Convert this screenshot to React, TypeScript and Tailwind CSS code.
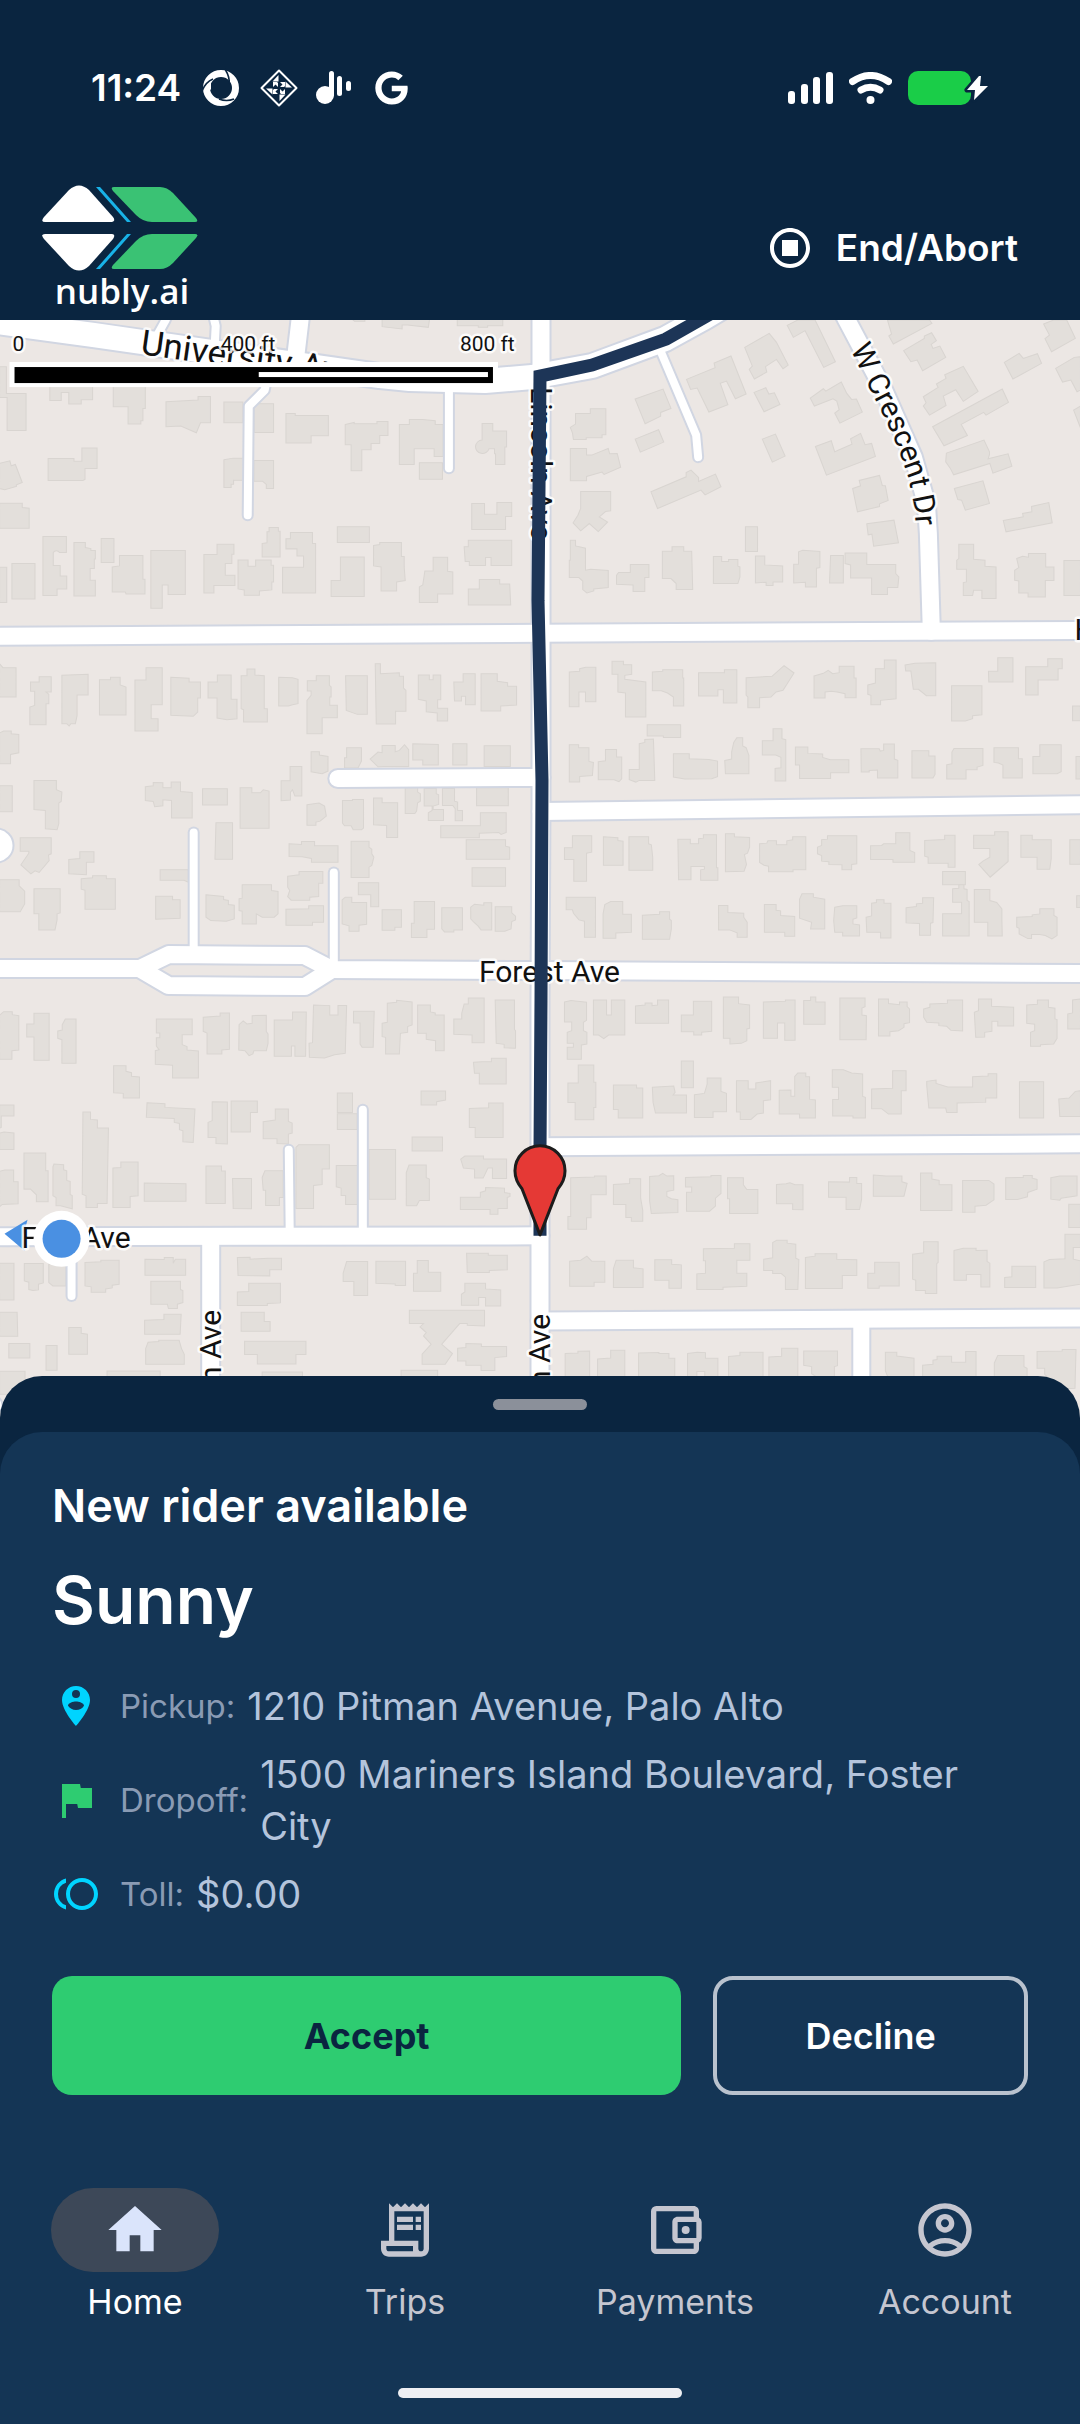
import type { ReactNode } from 'react';
import type { IconType } from 'react-icons';
import { FaGoogle } from 'react-icons/fa';
import {
  MdFlag,
  MdHome,
  MdOutlineAccountBalanceWallet,
  MdOutlineAccountCircle,
  MdOutlineReceiptLong,
  MdOutlineStopCircle,
  MdPersonPinCircle,
  MdToll
} from 'react-icons/md';

// Building footprints, grouped by map tile. Every tile has its own 1568 x 1200 unit grid.
interface Tile {
  id: string;
  x: number;
  y: number;
  buildings: string[];
}

const TILES: Tile[] = [
  {
    id: 'north-west',
    x: 0,
    y: 310,
    buildings: [
      'M0 170h20v80h57v111h-55v-99h-22z M146 225H270V269H237V282H201V247H179V271H146Z M330 225H423V295H416V332H410V342H373V290H330Z',
      'M483 275L576 270V259H612V338H583L571 368L526 348L483 350Z M651 276H706V338H651Z M739 281H795V367H739Z M831 310H858V316H954V377H904V399H831Z',
      'M1003 343L1029 337V341H1095V334H1127V376H1103V400H1078V419H1051V482H1020V404H1003Z M1160 343H1189V328H1227L1264 332V343H1287V439H1261V416H1203V463H1160Z',
      'M1218 458H1285V507H1218Z M1400 340H1431V363H1471V411H1466V463H1439V431H1436V416H1420A20 20 0 1 1 1400 390Z M141 445H216V453H239V414H283V475H248V508L242 511H141Z',
      'M0 460L30 452L34 467L46 463L66 517L49 524V529L15 539L0 535Z M0 579H66V592L86 594V654H0Z M651 449L678 444H708V510H679V522H672V532H651Z',
      'M738 451H795V535H774V523L763 513H738Z M1370 580H1407V612H1443V577H1486V619H1468V658H1370Z M126 679H194V727H174A10 10 0 0 0 156 727V766H176V797H195V836H167V856H126Z',
      'M216 697H249V712L265 715V721H278V746H275V775H263V810H278V857H216Z M295 685H332V757H295Z M327 770L348 767V736H416V807H422V851H367L365 845H327Z',
      'M439 721H539V853H489V824H472V894H439Z M593 733H631V702H680V732H674V760H655V795H683V826H622V848H593Z M692 749H721V768H743V749H788V765H795V815H790V839L754 842V855H710V839L692 836Z',
      'M762 700L776 698V665H782V652H809V663H814V740H762Z M831 686H844V667H908V700H917V848H821V771H882V737H863V716H831Z M980 650H1073V697H980Z M962 811H989V740H1058V859H962Z',
      'M1085 706L1103 703V697H1166V739H1174V770L1177 811L1152 815V842H1107V770L1085 767Z M1218 830L1228 824L1234 782H1258V741H1300V783L1315 785V851H1271V877H1218Z',
      'M1348 710H1360V690H1486V766H1426V742H1410V766H1363V754H1351Z M1360 836H1392V808H1451V821H1480L1483 884H1360Z M36 760H103V866H36Z M0 771H21V877H0Z',
      'M1110 25H1248L1244 52L1184 45H1168V57L1110 50Z M1328 25H1460V47H1416V52H1389V47H1328Z M1020 25H1060V34H1030Z',
      'M0 1060L10 1072H48V1160H0Z M90 1115H115V1099H150V1145H135L143 1152V1180H135V1243H88V1190L102 1185V1143H90Z M181 1095L257 1092V1154H225V1216L220 1240H207L202 1247L195 1240H181Z',
      'M290 1108H322V1101H350V1124L367 1130V1214H290Z M393 1109H425V1072H472V1183H440V1225H460V1262H393Z M497 1101L550 1104V1115H583V1163H575V1205L562 1218L497 1215Z',
      'M605 1115H632V1094H672V1167H689V1225L660 1228L631 1223V1163H605Z M701 1096H718V1076H741V1094L768 1096V1195H777V1235H708V1198L701 1195Z M810 1101L850 1102L866 1107V1180L850 1183L838 1187H810Z',
      'M893 1111H919V1096H957V1125L962 1130V1160H958V1185H980V1222H936V1270H892V1170L904 1155V1142H893Z M1004 1096H1067V1212H1038L1006 1200Z M1090 1060H1105V1090L1160 1087V1098H1172V1133L1179 1140V1203H1149V1241H1093Z',
      'M1215 1094H1247V1108H1258V1094H1280V1168H1271V1194H1300V1232H1270V1208L1238 1204V1172L1215 1167Z M1318 1115H1345V1090H1380V1183H1352V1158H1340V1172H1320Z M1397 1090H1444V1113L1474 1117V1128H1500V1184L1454 1187V1202H1397Z'
    ]
  },
  {
    id: 'north-east',
    x: 540,
    y: 310,
    buildings: [
      'M88 352L103 342V310H146V296H191V374H180V383H134V388H97L94 368Z M276 267L357 237L380 295L350 307V318L305 341Z M276 387L344 359L359 396L291 426Z',
      'M88 415H135V435H150L198 415L202 431L224 430L234 471L186 493L180 486L135 499V512H88Z M322 545L424 500V487L438 480L460 502V514L509 492L525 530L479 554L467 540L341 595Z',
      'M425 208L508 173L505 159L554 138L598 252L567 266L541 213L523 220L545 284L490 306L456 234L437 238Z M594 112L665 70L686 97L720 165L705 176L686 148L654 170L658 186L622 207L607 178L616 168Z',
      'M621 247L655 233L664 252L680 248L696 283L650 305Z M717 46L748 30H798L857 155L823 172L769 62L735 82Z M784 264L822 236L829 243L874 216L890 250L904 268L918 267L935 306L870 339L855 309L868 299L861 273L850 266L796 288Z',
      'M645 387L683 372L711 438L674 456Z M799 409L845 392L855 425L905 402L901 386L930 370L943 404L962 400L973 439L831 495Z M907 535L930 527L926 511L985 496L993 526L1002 527L1010 571L985 581V589L921 605Z',
      'M948 641L1027 630L1040 698L968 708L963 672L952 674Z M118 544H205V602L190 604L172 620L196 636L169 664L143 640L118 662L96 638L110 615L118 595Z',
      'M88 690H103V707L132 714V780L147 777L198 781V832L156 836V842L136 848L124 838V813L113 802H85V750H88Z M222 795L228 787H262V763H316V802H304V844H270V824L222 822Z',
      'M355 723H383V710H417V723H440L443 838H395V820L380 805H355Z M503 739H527V754H547V748H574V768L580 770V800L574 820H503Z M596 650H631V724H596Z',
      'M625 737H652V764L704 767V815H676V826H656V816L625 818Z M736 762H750V725L762 720L812 724V772L802 774V830H770V816L736 818Z M843 736H880V818H840Z',
      'M885 728H948V763H1032V790L1041 800L1038 832H1008V853H962V803H901V764L885 760Z M1008 30H1130L1137 40L1025 102L1012 78L1020 72Z',
      'M1055 122L1115 85V78L1136 68L1150 92L1135 103L1140 115L1160 108L1177 142L1110 182L1094 150L1076 155Z M1112 260L1155 232L1150 222L1178 205L1174 194L1228 169L1271 244L1228 274L1206 239L1170 258L1178 286L1130 315L1112 288L1120 278Z',
      'M1139 350L1341 237L1359 277L1294 315L1287 307L1222 343L1240 376L1172 407Z M1179 429L1288 390L1304 425V433L1300 446L1358 431L1369 468L1314 489L1305 460L1200 494L1190 474L1177 455Z',
      'M1202 535L1285 512L1304 580L1234 600L1223 570L1212 568Z M1344 631L1402 620L1400 610L1427 605L1426 589L1476 577L1486 638L1352 665Z M1347 157L1390 130L1402 145L1443 131L1455 160L1372 207Z',
      'M1461 42L1490 30H1528L1553 85L1484 125L1465 86L1478 75Z M1496 175L1550 142L1568 140V240L1558 245L1540 210L1516 216Z M1548 300L1568 288V353Z',
      'M1215 702H1258V747L1291 750V768L1323 770V865H1282V840H1258L1255 856H1228V817L1237 815V777H1209V750L1215 745Z M1383 745L1400 738L1417 741V730H1467V770H1491V811H1466V860H1416V848H1389V812L1377 810V780L1389 772Z M1520 751H1568V856H1520Z',
      'M85 1085L115 1083V1075L133 1071H162V1174H132V1145H113V1189H85Z M209 1053H242V1063H266V1092L246 1095V1107L307 1115V1220H248V1148L226 1145V1092H209Z M326 1085L356 1083V1078H414V1103H417V1187H387V1160L370 1148L352 1141H326Z',
      'M460 1087H535V1078H571V1178H532V1138H516V1157H460Z M598 1102L673 1098L708 1066L737 1088L705 1140L685 1145L670 1160L637 1162V1192H603V1160L598 1155Z M795 1097L822 1089L836 1080L849 1090L868 1087V1068H911V1103H917V1162H885V1150L862 1145L845 1143L827 1145V1163H795Z',
      'M951 1124L973 1118V1075H999V1049H1033V1165L988 1170V1183H960V1155L951 1152Z M1059 1064L1088 1059L1148 1057V1156H1121L1098 1137H1083L1076 1082H1061Z M1194 1126H1282V1213L1255 1216V1225L1234 1232H1194Z',
      'M1301 1083H1328V1042H1372V1115H1302Z M1409 1069H1473V1045H1515V1075H1503V1109H1445V1154H1409Z M1545 1187h23v44h-23z'
    ]
  },
  {
    id: 'middle-west',
    x: 0,
    y: 700,
    buildings: [
      'M0 98L12 92H34V100L56 102V157L32 162V190H0Z M0 256H37V334H0Z M100 240H165V268L181 275L179 303L172 308V370L167 388L133 385V330L100 327Z M60 412H150V460L142 464L144 480L115 516L103 511L91 520L62 493L85 458V452H60Z',
      'M201 477L233 474V454H274V485H252V523L201 520Z M0 538H57V556L73 572V610L60 634H0Z M100 565H176V637L167 640V658L161 688H114V640H100Z M237 535L270 532V526H310V535H336V626H248V569L237 566Z',
      'M423 259L446 256V246L474 247V262H498V245H525V273L559 276V353H499V300L474 298V316L450 319L446 303L423 300Z M589 265H661V314H589Z M698 262H732V277H757L765 268L782 272V383H698Z',
      'M817 241H843V198H877V287H857L850 268L844 275V299L817 301Z M628 367H676V476H625Z M904 154H928V164L953 168V212L936 220L904 214Z M1001 172H1007V142H1050V182L1040 203H1001Z',
      'M1075 176L1098 155L1110 157V135H1148V154L1160 150L1175 133L1187 148V198H1115L1098 199Z M1199 130L1273 132V194H1228V179H1199Z M1315 130H1356V194H1315Z M1406 136H1482V198H1406Z',
      'M466 508H548V545L535 539H466Z M453 587H502V598H524V653L453 656Z M599 583L650 588V597L664 600V612L681 614V655L658 662L613 660L599 650Z M695 595L704 593V553H789V570L808 573V640L797 650H762L745 640V670H704V632L695 630Z',
      'M836 527L869 523V513H938V548H926V588L900 590V599H846L836 588L842 570L836 560Z M831 626L897 625V616H940V665H908V674H831Z M840 430L876 432V423H914V436H982V485H905V474L878 469L840 468Z',
      'M892 313L927 308L943 317L948 347L930 362L918 365V374H892Z M995 300H1024V297H1056V383L1050 388H1026L1020 376H1001L995 368Z M1085 293H1110V307H1155V411H1123V375L1085 373Z M1177 262H1213V275L1221 280V302L1213 307L1210 332L1205 339H1177Z',
      'M1232 264H1267V280L1274 283V312L1258 317V327H1288V360H1244V337L1255 330V317H1232Z M1285 264H1320V302L1329 305V330H1343V361H1322V325L1315 315H1285Z M1384 262H1476V316H1384Z M1280 376H1395V337H1470V396L1455 402L1448 396L1392 398V412H1280Z',
      'M1354 418H1468V437L1480 440V476H1354Z M1371 502H1468V557H1371Z M1020 422H1072V440L1080 446V460L1086 470L1080 495L1072 500V531H1020Z M1041 547H1100V619H1077V583H1041Z M994 598L1003 590H1022V606H1065V671L1043 674V692H1014V676L994 670Z',
      'M1110 628H1166V680H1147V689H1110Z M1203 603H1262V686H1240V711H1195V668H1203Z M1283 622H1343V688H1318V694H1291L1283 685Z M1367 620L1378 611L1405 614V607H1428V688H1397L1388 676L1376 665L1367 655Z M1438 619H1486V637L1497 647V658L1486 663L1484 685L1466 692H1438Z',
      'M0 944L12 933H37V942L56 945V1048L36 1050V1076H0Z M79 970H100V938H144V1079H100V1009H79Z M169 991L182 988V972L191 955H222V1088H181V1017L169 1013Z M455 955H559V1002H530V1032L544 1038V1048L577 1051V1132H502V1094L452 1091V1050L463 1047L455 1036V1011H465V997H455Z',
      'M591 950L640 946V937H667V1046L645 1048V1060H602V997L591 992Z M695 972L707 961L718 970L733 968V945L774 944V993L779 1000V1028L774 1050H738L735 1060L724 1065L712 1050L694 1048Z M797 958H850V934H890L888 1067H857V1036H847V1067H797Z',
      'M898 1028L908 1026L911 913L958 915V943H982V915H1007L1003 1058L972 1062L943 1072L899 1070Z M1027 932H1087L1084 1040H1052L1046 1030V967H1027Z M1110 968L1125 965V908L1152 905V899L1197 904V973L1184 978V995L1163 998L1160 1060H1120V1010L1110 1008Z',
      'M1213 913H1250V934L1264 937V943H1290V1050H1265V1020L1238 1016V998H1213Z M1318 955H1341V938L1348 910H1360V892H1406V1026H1371V1003L1318 1001Z M1438 898H1494V987L1497 990V1043L1464 1041V1031L1441 1028Z',
      'M331 1095H367V1112L383 1116V1127L406 1129V1192H359V1178L331 1176Z M1375 1085L1400 1083H1427V1073H1470V1150H1392V1118H1378Z M980 1177H1024V1235H980Z M1223 1171H1294V1198L1268 1203V1213H1223Z'
    ]
  },
  {
    id: 'middle-east',
    x: 540,
    y: 700,
    buildings: [
      'M311 73H408V111H358V107H311Z M85 133H112V142H142V183L155 186L152 225L115 228V245H85Z M169 184L190 181V147H222V170H237V235L229 244L215 238H169Z M259 207H288V130L304 126V117L329 116L333 240H288L278 245L259 238Z',
      'M387 160H433V175L490 177L515 182V229L498 235L420 236L387 230Z M536 180L556 176V155L562 126L571 112H588V137L598 142L606 165V220H538Z M645 121H676V85H702V115L713 118V242H682V204L699 202V171L684 164H645Z',
      'M741 140H777V159L820 161V171L842 178H896V217H843V234H753V194H741Z M931 145H984L987 152L997 150V131H1028V176L1038 180V233H979V209L955 210V215H932Z M1079 151H1128V167H1146V222L1140 233H1079Z',
      'M1180 193L1195 190V155L1201 144H1285V195L1268 200V208H1236V236H1180Z M1317 142H1388V175H1399V233H1343V194L1330 188L1317 186Z M1430 168H1450V133H1512V214L1500 220H1430Z M1555 168H1568V236H1555Z',
      'M71 442H94V406H150V455L135 458V542H98V477H71Z M184 409L226 412V420L241 422V494H184Z M258 409H315V430L323 433L327 470V509H258Z M400 416H436V430H460V415L474 413V403H512V502H516V539H466V508L477 506V498H438V538H402Z',
      'M538 400H564V409L608 411V440L602 458L593 462L599 492L592 512L538 514Z M637 430L658 428L661 421H686V433H716V421L733 418V409H771V508H734V514H663V497L650 494L637 486Z M805 440L817 435V418L834 416V406H919V490L904 492V508H876V493L838 492V484L817 482V465L805 460Z',
      'M959 436L991 435L997 430H1032V397H1073V450L1087 456V485H1024V477H959Z M1116 420L1174 417V404H1204V500H1184V488H1126V470L1116 467Z M1168 513H1234V553H1168Z M1258 404H1319V394H1358V483L1306 530L1273 492L1285 482L1305 470V444H1258Z',
      'M1395 404H1428V418H1483V475L1479 506H1442V470H1395Z M1537 418H1568V491H1537Z M76 590H161V710H129V662L113 658L97 638L94 628H76Z M183 640L188 612L205 603H240V641H265V695L220 697V713H183Z M297 644L347 641V634H376V656L381 660V685L376 716H297Z',
      'M518 615H545V636L591 638V650L601 665V710H572V697L550 688H518Z M651 612H685V629L698 631V645L739 648V707H710V695H651Z M753 596L760 580H793V590L826 596V685H785L788 665L753 653Z M855 620L878 616H919V652L908 656V670L927 673V706H878V695H855L852 660Z',
      'M946 650L962 646V608L976 606V598H998V608H1018V712H988V695H948Z M1062 622L1092 618V610L1110 608V592H1142L1140 666L1133 668V704H1101V669L1062 667Z M1197 565L1215 563V553H1230V565L1239 567V600L1245 603V706H1168V640H1223V605H1197Z',
      'M1260 567H1305V600L1325 606L1340 625V660L1341 706H1299V665H1260Z M1383 650L1428 648V643L1450 640V625H1491V645L1500 650V705L1485 715L1466 705L1450 702H1426V714H1415L1390 700V683L1383 680Z M1557 586h11v35h-11z',
      'M71 904L90 900L135 905V959L126 965V990L136 995V1030L120 1033V1076H79V1040H97V1028H79V995L92 990V964H71Z M155 898H193V943H207V898H246V1003H199L185 1014L170 1003H155Z M277 916L305 913V907H325V915L341 913V898H373V968H277Z',
      'M410 943H445V902H498V992L469 995V1003H446V993H410Z M532 889H576V909L608 913V983L600 985V1020L584 1028L551 1030V1013H532Z M648 904L712 902V898H740V1019H710V967H689V1013H648Z M765 900H785V889H800V904H827V971H765Z M870 892H943V918L934 922V943L947 945L946 1017H870Z',
      'M982 895H1011V909L1043 912V904H1065V918L1072 925V966L1056 969V980L1040 990L1015 993V1006H982Z M1113 925L1131 920V910L1182 908V898H1226V991L1192 989L1180 977L1157 975V967L1122 965L1113 950Z M1260 935L1272 930V895H1310V917L1374 920V976H1328V962H1311V992L1290 995V1009L1264 1010Z',
      'M1412 913L1443 911V898H1475V920L1494 923V955L1500 957V1013L1490 1030L1452 1032V1037H1423V995L1435 990V971L1412 968Z M1531 940L1545 937V898L1568 895V985H1531Z M81 1147H111V1093H156V1145H162V1220H156V1257H102V1205H81Z',
      'M213 1153H280V1162H298V1252H227V1226H213Z M326 1160L388 1156L392 1175L386 1183H425V1237H335L328 1205Z M410 1081H445V1161H410Z M448 1182L477 1178L485 1150V1132H525V1172L541 1178V1233H502V1250H448Z',
      'M570 1140H604V1165H626V1147L669 1140V1197L648 1200V1237L630 1240L612 1256H581V1234H570Z M694 1169L728 1168V1187H739V1127L748 1117H771V1128H782V1196L799 1198V1252H753V1240H694Z M848 1107H880L904 1117L936 1120V1187L944 1190V1252H908V1246H849V1196H866V1160H848Z',
      'M962 1165L1023 1163V1110H1062V1170H1048V1240H1011L991 1224H962Z M1122 1155V1142L1149 1138V1148L1183 1159H1255V1128L1300 1126V1119H1325V1192H1293V1205L1210 1207V1235H1180L1177 1222H1128Z M1391 1143H1461V1252H1391Z M1505 1195L1535 1192L1553 1172L1568 1170V1247H1508Z'
    ]
  },
  {
    id: 'south-west',
    x: 0,
    y: 1080,
    buildings: [
      'M0 73H42V106H5V140L0 142Z M0 157L13 154L42 157V206H0Z M71 217H134V270H141V363H107V342L90 325H71Z M0 272L15 268H41V303H54V369L8 371L0 378Z M155 258L158 250L186 252V267L195 270V299L205 302V341L211 344V384L177 375H164V350L155 345Z',
      'M242 94H264V116L284 118V142H316L312 368H284V380H251V345L240 340Z M329 262L352 260V244H402V345L379 347V380H329Z M428 66L480 69V80L567 85L562 185L532 183V150L522 147V128L507 125V113L426 110Z M420 307L541 309V361H420Z',
      'M605 125L617 120V63L661 64V190L628 188V170H605Z M672 61H748V95H728V154H672Z M765 123L800 118V85H838V122L849 127V157L838 160V190L805 188V174H765Z M599 256H644V271H655V368H599Z M676 293H731V384L678 383Z',
      'M762 290L770 270H823V350H812V374H772V328H765Z M860 200L868 192H957V265H936V311L911 314V383H860Z M977 254H1040V371H1004V344H991V322L977 318Z M980 99H1038V146H980Z M1072 206H1149V355H1072Z M1197 169H1285V211H1197Z',
      'M1180 276L1188 253H1238V291L1247 295V359H1218L1210 375H1180Z M1363 83L1419 81V67H1461V170H1380V140H1363Z M1338 235L1350 226H1404V235H1471V293H1430V262H1417L1403 292H1378V265L1346 262Z M1337 349H1395V335L1410 330V320L1465 322V335L1481 338V347L1473 350V383H1446V400H1423V386H1337Z',
      'M0 547H42V657H0Z M72 548H127V606L113 610V627L97 629L85 626V604L72 600Z M143 550H193V615H155L143 605Z M248 545L294 543V538H347V610L327 613V621L308 624V634H266V618L248 615Z M422 535L478 536V530H504V547L510 535H540V583H422Z',
      'M439 601H525V626L532 629V665L516 670V683H490L487 670H439Z M421 718L477 716V700H527L524 760H421Z M424 803L431 784L462 782V778H521L528 803L536 820V850H424Z M690 530L727 529V535L780 532H818V567H784V585L692 584Z',
      'M690 633L723 632V607H815V666L777 668V674H690Z M701 694H768V722H785V751H701Z M711 781H889V821H860V849H748V821H711Z M762 873H879V890H762Z M312 870H466V890H312Z M997 577L1007 542H1068V644H1028V602H997Z M1092 541H1178V614H1148V609L1092 607Z',
      'M1201 577H1212V539H1244V574H1280V631H1201Z M1355 517H1418V523H1473V567L1421 569V575H1357Z M1340 640L1350 633V607H1410V624L1454 627V675H1410V650H1390V673H1340Z',
      'M1189 688H1407V735L1357 733V728H1335L1283 790L1314 818L1293 850H1226V820L1252 790L1230 765L1238 755L1220 738L1230 728H1189Z M1329 802L1353 800V788L1398 789V797H1471V827L1437 830V869H1397V853H1353V840H1329Z M1165 868H1271V890H1165Z',
      'M0 694H51L53 766H0Z M27 788H88V831H27Z M201 740H237V757L255 760V820H201Z M135 794H167V868H135Z M0 871H74V940H0Z'
    ]
  },
  {
    id: 'south-east',
    x: 540,
    y: 1080,
    buildings: [
      'M89 291L158 289V286H192V342H148V411H135V445H81V407H89Z M213 311L260 308V294H292V352L298 388V421H265V410H249V371H213Z M318 287L345 285L356 278L368 286L388 285V328L368 332V347L381 354L400 357V395L323 398L318 360Z',
      'M422 290L496 288V284H525V338L509 352V376L492 391H425V334H440V319H422Z M544 291H590V312L600 326H632V398H550V354H544Z M686 311L714 309L725 306L740 312H763V387L733 386V369H686Z M837 303L898 304V290H919V308H933V355L927 386H888V349H837Z',
      'M967 283L1003 286H1050V303L1065 308L1056 346H967Z M1104 277H1137V295L1158 299V312H1195V389H1104Z M1226 299H1302L1317 310V357L1294 373L1262 376V394H1226Z M1351 291L1402 290V284H1428V292L1442 296V325L1415 335L1414 348L1385 356H1351Z',
      'M1482 291L1508 286H1558V345L1512 352L1508 358L1482 355Z M1534 370h34v70h-34z M86 541L118 538L136 526L150 541H188V604H157V616H86Z M213 563L221 538H271V561L299 564V620H213Z M333 537H382V550L410 552V622H374V598H333Z',
      'M474 504L564 502V489H609V538H571V577H600V616L531 619V626H455V579L480 577V540H474Z M649 535L675 531V485L687 478H717V487L742 490V532L751 536L748 626H712V589L700 578H675V569H649Z M770 530L798 526V519H861V535L919 537V584H877V623H770Z',
      'M951 577H971V544H1042V615H984V622H951Z M1081 520L1113 516V483H1155V545L1151 548V638H1118V629H1090V598L1081 595Z M1201 509L1228 502H1265V509L1297 508V542L1305 547V618H1279V581H1237V598H1201Z M1348 590L1369 588V556H1438V620H1348Z',
      'M1462 543L1478 536L1523 534V460H1568V500H1547V535L1568 540V610L1500 621H1462Z M73 818L110 816V811L144 810V890H73Z M167 834L205 831V808H246V890H167Z M286 816L345 815V818H374V832H391V890H286Z M428 818L456 814L480 815V832H516V890H478V872H455V890H428Z',
      'M547 827L580 824V814H647V890H547Z M664 828L701 826V802H748V890H664Z M765 810H863V854L854 857V890H806L788 878V857L765 853Z M1002 814H1035V825L1085 832V890H1010L1002 870Z',
      'M1110 853L1140 850V838L1152 836V826H1194V844H1235V812H1265V890H1110Z M1318 846L1328 824H1404V857L1413 862V890H1318Z M1442 812L1515 810V806H1555L1552 922L1512 924L1464 880V862H1442Z'
    ]
  }
];

const ROADS = [
  { width: 24, d: 'M-40 317L94 335L380 376L410 379L485 381L532 377L592 366L665 339L705 317L740 296' },
  { width: 17, d: 'M541 290V800L540 1000V1480' },
  { width: 17, d: 'M302 305L296 356' },
  { width: 17, d: 'M828 284L846 319L882 387L913 457L926 503L928 533L931 631' },
  { width: 17, d: 'M-20 636L540 633L1100 630' },
  { width: 17, d: 'M338 778L541 777' },
  { width: 17, d: 'M541 811L1100 804' },
  { width: 17, d: 'M-20 968H140L169 954L305 955L332 969L541 970L1100 973' },
  { width: 17, d: 'M140 968L169 985L305 986L332 969' },
  { width: 17, d: 'M541 1146L1100 1143' },
  { width: 17, d: 'M-20 1236L540 1235' },
  { width: 17, d: 'M540 1320L1100 1317' },
  { width: 16, d: 'M861 1318V1480' },
  { width: 17, d: 'M211 1236V1480' },
  { width: 8, d: 'M172 305L166 320L156 338' },
  { width: 8, d: 'M211 305L216 326L215 345' },
  { width: 8, d: 'M268 374L265 390L249 406L248 515' },
  { width: 8, d: 'M449 385V468' },
  { width: 8, d: 'M660 350L696 435L698 457' },
  { width: 8, d: 'M194 832V955' },
  { width: 8, d: 'M334 872V965' },
  { width: 8, d: 'M289 1149L290 1236' },
  { width: 8, d: 'M363 1109V1236' },
  { width: 8, d: 'M72 1236V1295' }
];

interface MapLabelProps {
  children: ReactNode;
  x?: number;
  y?: number;
  transform?: string;
  textAnchor?: 'start' | 'end';
  fontSize?: number;
}

function MapLabel({ children, ...rest }: MapLabelProps) {
  return (
    <text fill="#111" stroke="#fff" strokeWidth={5} strokeOpacity={0.85} strokeLinejoin="round" paintOrder="stroke" fontSize={30} {...rest}>
      {children}
    </text>
  );
}

function RouteMap() {
  return (
    <svg
      className="min-h-0 w-full flex-1 bg-[#ece7e4] font-[Roboto,sans-serif]"
      viewBox="0 320 1080 1097"
      preserveAspectRatio="xMidYMin slice"
      role="img"
      aria-label="Route map"
    >
      {TILES.map((tile) => (
        <g key={tile.id} transform={`translate(${tile.x} ${tile.y}) scale(${540 / 1568} ${1 / 3})`} fill="#e3dfdb" stroke="#d9d5d1" strokeWidth={3}>
          {tile.buildings.map((d) => <path key={d} d={d} />)}
        </g>
      ))}

      <g fill="none" strokeLinecap="round" strokeLinejoin="round">
        {ROADS.map((road) => (
          <path key={road.d} d={road.d} stroke="#d1d6e2" strokeWidth={road.width + 4} />
        ))}
        <circle cx={-3} cy={845} r={17} fill="#fff" stroke="#d1d6e2" strokeWidth={2} />
        <circle cx={-6} cy={1404} r={9} fill="#fff" stroke="#d1d6e2" strokeWidth={2} />
        {ROADS.map((road) => (
          <path key={road.d} d={road.d} stroke="#fff" strokeWidth={road.width} />
        ))}
      </g>

      <path id="w-crescent" d="M850 349L869 388L885 419L898 449L908 477L914 507L917 545" fill="none" />
      <MapLabel>
        <textPath href="#w-crescent">W Crescent Dr</textPath>
      </MapLabel>
      <MapLabel transform="translate(140 354) rotate(8)" fontSize={35}>University Ave</MapLabel>
      <MapLabel transform="translate(531 387) rotate(90)">Lincoln Ave</MapLabel>
      <MapLabel x={479} y={981}>Forest Ave</MapLabel>
      <MapLabel x={1074} y={640}>H</MapLabel>
      <MapLabel transform="translate(221 1309) rotate(-90)" textAnchor="end">n Ave</MapLabel>
      <MapLabel transform="translate(550 1313) rotate(-90)" textAnchor="end">n Ave</MapLabel>

      <path d="M540 1235V1150L541 1000L542 780L538 600L540 376L592 365L666 339L710 314L740 297" fill="none" stroke="#1d3557" strokeWidth={13} />
      <path
        d="M540 1234L522 1188C517 1182 515 1176 515 1170A25 25 0 0 1 565 1170C565 1176 563 1182 558 1188Z"
        fill="#e53935"
        stroke="#1c1c1c"
        strokeWidth={3}
        strokeLinejoin="round"
      />

      <path d="M5 1233L28 1219L24 1234L25 1250Z" fill="#4a90e2" />
      <MapLabel x={22} y={1247}>F</MapLabel>
      <MapLabel x={131} y={1247} textAnchor="end">Ave</MapLabel>
      <circle cx={62} cy={1238} r={28} fill="#fff" />
      <circle cx={62} cy={1238} r={19} fill="#4a90e2" />

      {/* Scale bar */}
      <rect x={10} y={362} width={488} height={25} fill="#fff" />
      <rect x={15} y={367} width={478} height={16} fill="#000" />
      <rect x={259} y={372} width={229} height={5} fill="#fff" />
      <MapLabel x={13} y={351} fontSize={21}>0</MapLabel>
      <MapLabel x={221} y={351} fontSize={21}>400 ft</MapLabel>
      <MapLabel x={460} y={351} fontSize={21}>800 ft</MapLabel>
    </svg>
  );
}

const QUARTER_TURNS = [0, 90, 180, 270];

function StatusBar() {
  return (
    <div className="flex h-16 items-center justify-between pr-[92px] pl-[91px]">
      <div className="flex items-center">
        <span className="mr-5 text-[37px] font-semibold leading-10">11:24</span>
        <svg className="mr-[18px] h-10 w-10" viewBox="0 0 40 40" fill="none">
          <circle cx={20} cy={20} r={14.5} stroke="currentColor" strokeWidth={7} />
          <path d="M28 10L32 18V11Z M28 30L19 32L26 35Z M10 22L10 12L5 18Z" fill="currentColor" />
          <path d="M24 1C27 6 29 11 28 16 M33 31C28 33 23 33 18 31 M1 23C3 18 7 13 12 11" stroke="#0a2540" strokeWidth={1.6} />
        </svg>
        <svg className="mr-4 h-10 w-10" viewBox="0 0 40 40" fill="currentColor">
          <path d="M20 2.5L37.5 20L20 37.500L2.500 20Z" fill="none" stroke="currentColor" strokeWidth={2} strokeLinejoin="round" />
          {QUARTER_TURNS.map((angle) => (
            <path key={angle} d="M19.500 7V13.500H13.500Z M21 14H26V19Z M15 15H19V19Z" transform={`rotate(${angle} 20 20)`} />
          ))}
        </svg>
        <svg className="mr-6 h-10 w-9" viewBox="0 0 36 40" fill="currentColor">
          <circle cx={10} cy={27} r={9} />
          <rect x={14} y={3} width={5} height={26} rx={2.5} />
          <rect x={22} y={8} width={5} height={20} rx={2.5} />
          <rect x={31} y={13} width={5} height={10} rx={2.5} />
        </svg>
        <FaGoogle className="h-[34px] w-[33px]" />
      </div>
      <div className="flex items-center">
        <svg className="mr-4 h-8 w-[45px]" viewBox="0 0 45 32" fill="currentColor">
          <rect x={0} y={19} width={7} height={13} rx={3} />
          <rect x={13} y={12} width={7} height={20} rx={3} />
          <rect x={25} y={5} width={7} height={27} rx={3} />
          <rect x={38} y={0} width={7} height={32} rx={3} />
        </svg>
        <svg className="mr-4 h-8 w-[43px]" viewBox="0 0 43 32" fill="none" stroke="currentColor" strokeWidth={7} strokeLinecap="round">
          <path d="M3.500 9.500Q21.500 -2.500 39.500 9.500" />
          <path d="M12 18Q21.500 12.500 31 18" />
          <circle cx={21.5} cy={28} r={4} fill="currentColor" stroke="none" />
        </svg>
        <svg className="h-[34px] w-20" viewBox="0 0 80 34">
          <rect width={63} height={34} rx={10} fill="#1acd48" />
          <path d="M71 5L59 19H67L66 29L80 15H72L73 5Z" fill="#fff" stroke="#0a2540" strokeWidth={5} paintOrder="stroke" strokeLinejoin="round" />
        </svg>
      </div>
    </div>
  );
}

function Logo() {
  return (
    <svg className="h-[140px] w-[168px]" viewBox="0 0 168 140" role="img" aria-label="nubly.ai">
      <path d="M8 39L33 12Q43 3 53 12L77 39Q80 43 76 44H9Q4 44 8 39Z" fill="#fff" />
      <path d="M8 61L33 88Q43 97 53 88L77 61Q80 56 76 56H9Q4 56 8 61Z" fill="#fff" />
      <path d="M60 9H64L95 44H91Z M60 91H64L95 56H91Z" fill="#18b2e8" />
      <path d="M78 9H124Q131 9 137 15L160 40Q163 44 159 44H116Q107 44 100 37L77 13Q74 9 78 9Z" fill="#3ac274" />
      <path d="M78 91H124Q131 91 137 85L160 60Q163 56 159 56H116Q107 56 100 63L77 87Q74 91 78 91Z" fill="#3ac274" />
      <text x={86} y={126} textAnchor="middle" fill="#fff" fontSize={35} fontWeight={600} className="font-['Open_Sans',sans-serif]">nubly.ai</text>
    </svg>
  );
}

function Header() {
  return (
    <header className="pt-14">
      <StatusBar />
      <div className="flex h-[200px] items-center justify-between pt-14 pr-[62px] pl-9">
        <Logo />
        <button type="button" className="flex items-center gap-[22px] text-[37px] font-semibold leading-10">
          <MdOutlineStopCircle className="h-12 w-12" />
          End/Abort
        </button>
      </div>
    </header>
  );
}

interface TripRowProps {
  icon: IconType;
  iconColor: string;
  label: string;
  value: string;
}

function TripRow({ icon: Icon, iconColor, label, value }: TripRowProps) {
  return (
    <div className="flex items-center">
      <Icon className={`mr-5 h-12 w-12 flex-shrink-0 ${iconColor}`} />
      <dt className="mr-3 text-[33px] leading-[52px] text-[#8a9bb4]">{label}</dt>
      <dd className="text-[38px] leading-[52px] text-[#b4c4dc]">{value}</dd>
    </div>
  );
}

function RiderPanel() {
  return (
    <section className="px-[52px] pt-12">
      <p className="text-[45px] font-semibold leading-[52px]">New rider available</p>
      <h1 className="mt-7 text-[66px] font-semibold leading-[80px]">Sunny</h1>
      <dl className="mt-10 flex flex-col gap-4">
        <TripRow icon={MdPersonPinCircle} iconColor="text-[#00d4ff]" label="Pickup:" value="1210 Pitman Avenue, Palo Alto" />
        <TripRow icon={MdFlag} iconColor="text-[#2ecc71]" label="Dropoff:" value="1500 Mariners Island Boulevard, Foster City" />
        <TripRow icon={MdToll} iconColor="text-[#00d4ff]" label="Toll:" value="$0.00" />
      </dl>
      <div className="mt-14 grid grid-cols-[2fr_1fr] gap-8 text-[36px]">
        <button type="button" className="h-[119px] rounded-[20px] bg-[#2ecc71] font-bold text-[#0a2540]">Accept</button>
        <button type="button" className="h-[119px] rounded-[20px] border-4 border-[#b9c2ce] font-semibold">Decline</button>
      </div>
    </section>
  );
}

const NAV_ITEMS = [
  { label: 'Home', icon: MdHome, active: true },
  { label: 'Trips', icon: MdOutlineReceiptLong, active: false },
  { label: 'Payments', icon: MdOutlineAccountBalanceWallet, active: false },
  { label: 'Account', icon: MdOutlineAccountCircle, active: false }
];

function BottomNav() {
  return (
    <nav className="mt-[93px] grid grid-cols-4">
      {NAV_ITEMS.map(({ label, icon: Icon, active }) => (
        <a key={label} href={`#${label.toLowerCase()}`} className={`flex flex-col items-center ${active ? 'text-white' : 'text-[#c5c6d0]'}`}>
          <span className={`flex h-[84px] w-[168px] items-center justify-center rounded-full ${active ? 'bg-[#3d4858] text-[#dae4fb]' : ''}`}>
            <Icon className="h-16 w-16" />
          </span>
          <span className="mt-2 text-[34px] leading-[44px]">{label}</span>
        </a>
      ))}
    </nav>
  );
}

export default function App() {
  return (
    <div className="flex min-h-screen flex-col bg-[#0a2540] font-[Inter,sans-serif] text-white">
      <Header />
      <RouteMap />
      <main className="relative -mt-[42px] rounded-t-[42px] bg-[#0a2540]">
        <div className="flex h-14 items-center justify-center">
          <div className="h-[11px] w-[94px] rounded-full bg-[#8b909a]" />
        </div>
        <div className="rounded-t-[42px] bg-[#143555]">
          <RiderPanel />
          <BottomNav />
          <div className="flex justify-center pt-16 pb-[26px]">
            <div className="h-[10px] w-[284px] rounded-full bg-[#eeeff3]" />
          </div>
        </div>
      </main>
    </div>
  );
}
